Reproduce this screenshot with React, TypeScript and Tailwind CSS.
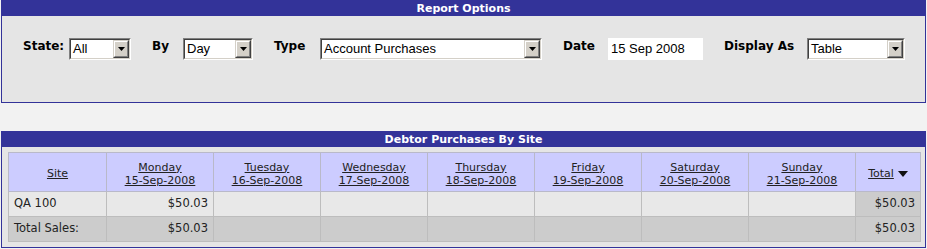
import React from 'react';

const days = [
  { day: 'Monday', date: '15-Sep-2008', value: '$50.03' },
  { day: 'Tuesday', date: '16-Sep-2008', value: '' },
  { day: 'Wednesday', date: '17-Sep-2008', value: '' },
  { day: 'Thursday', date: '18-Sep-2008', value: '' },
  { day: 'Friday', date: '19-Sep-2008', value: '' },
  { day: 'Saturday', date: '20-Sep-2008', value: '' },
  { day: 'Sunday', date: '21-Sep-2008', value: '' },
];

const Arrow: React.FC = () => (
  <svg width="7" height="4" viewBox="0 0 7 4" className="block">
    <path d="M0 0h7L3.5 4z" fill="#000" />
  </svg>
);

// old-school win2k style combo box
const Select: React.FC<{ value: string; width: string }> = ({ value, width }) => (
  <div className={`${width} h-[22px] border border-t-[#808080] border-l-[#808080] border-b-white border-r-white`}>
    <div className="h-full flex border border-t-[#404040] border-l-[#404040] border-b-[#d4d0c8] border-r-[#d4d0c8] bg-white">
      <span className="flex-1 pl-[2px] text-[13px] leading-[18px] text-black font-['Liberation_Sans',Arial,sans-serif] whitespace-nowrap overflow-hidden">
        {value}
      </span>
      <div className="w-[16px] h-full border border-t-[#d4d0c8] border-l-[#d4d0c8] border-b-[#404040] border-r-[#404040]">
        <div className="h-full flex items-center justify-center bg-[#d4d0c8] border border-t-white border-l-white border-b-[#808080] border-r-[#808080]">
          <Arrow />
        </div>
      </div>
    </div>
  </div>
);

const Label: React.FC<{ text: string; width: string }> = ({ text, width }) => (
  <div className={`${width} pt-[1px] text-[12px] leading-[14px] font-bold text-black whitespace-nowrap`}>{text}</div>
);

const PanelHeader: React.FC<{ title: string }> = ({ title }) => (
  <div className="h-[15px] bg-[#333399] text-white text-[11px] leading-[15px] font-bold text-center">{title}</div>
);

const App: React.FC = () => {
  return (
    <div className="w-[927px] h-[249px] bg-[#f2f2f2] font-['DejaVu_Sans',Verdana,sans-serif] overflow-hidden">
      {/* Report options */}
      <div className="ml-[1px] w-[925px] border border-[#333399] bg-[#e5e5e5]">
        <PanelHeader title="Report Options" />
        <div className="h-[86px] pl-[21px] pt-[22px] flex items-start">
          <Label text="State:" width="w-[46px]" />
          <Select value="All" width="w-[62px]" />
          <div className="w-[21px]" />
          <Label text="By" width="w-[31px]" />
          <Select value="Day" width="w-[70px]" />
          <div className="w-[21px]" />
          <Label text="Type" width="w-[46px]" />
          <Select value="Account Purchases" width="w-[222px]" />
          <div className="w-[21px]" />
          <Label text="Date" width="w-[45px]" />
          <div className="w-[95px] h-[22px] bg-white pl-[3px] text-[13px] leading-[22px] text-black font-['Liberation_Sans',Arial,sans-serif]">
            15 Sep 2008
          </div>
          <div className="w-[21px]" />
          <Label text="Display As" width="w-[83px]" />
          <Select value="Table" width="w-[98px]" />
        </div>
      </div>

      {/* Debtor purchases */}
      <div className="mt-[28px] ml-[1px] w-[925px] border border-[#333399] bg-[#e5e5e5]">
        <PanelHeader title="Debtor Purchases By Site" />
        <div className="pl-[6px] pr-[4px] pt-[5px] pb-[5px]">
          <table className="w-[913px] table-fixed border-collapse text-[11px] text-[#222]">
            <colgroup>
              <col className="w-[98px]" />
              {days.map((d) => (
                <col key={d.day} className="w-[107px]" />
              ))}
              <col />
            </colgroup>
            <thead>
              <tr className="h-[39px] bg-[#ccccff]">
                <th className="border border-[#b9b9c9] pt-[3px] font-normal text-center underline leading-[13px]">Site</th>
                {days.map((d) => (
                  <th key={d.day} className="border border-[#b9b9c9] pt-[3px] font-normal text-center underline leading-[13px]">
                    {d.day}
                    <br />
                    {d.date}
                  </th>
                ))}
                <th className="border border-[#b9b9c9] pt-[3px] font-normal leading-[13px]">
                  <span className="inline-flex items-center gap-[4px]">
                    <span className="underline">Total</span>
                    <svg width="10" height="6" viewBox="0 0 10 6">
                      <path d="M0 0h10L5 6z" fill="#111" />
                    </svg>
                  </span>
                </th>
              </tr>
            </thead>
            <tbody>
              <tr className="h-[25px] bg-[#e8e8e8]">
                <td className="border border-[#bdbdbd] px-[5px] text-[11.5px]">QA 100</td>
                {days.map((d) => (
                  <td key={d.day} className="border border-[#bdbdbd] px-[5px] text-right text-[11.5px]">{d.value}</td>
                ))}
                <td className="border border-[#bdbdbd] px-[5px] text-right text-[11.5px] bg-[#cccccc]">$50.03</td>
              </tr>
              <tr className="h-[25px] bg-[#cccccc]">
                <td className="border border-[#bdbdbd] px-[5px] text-[11.5px] whitespace-nowrap">Total Sales:</td>
                {days.map((d) => (
                  <td key={d.day} className="border border-[#bdbdbd] px-[5px] text-right text-[11.5px]">{d.value}</td>
                ))}
                <td className="border border-[#bdbdbd] px-[5px] text-right text-[11.5px]">$50.03</td>
              </tr>
            </tbody>
          </table>
        </div>
      </div>
    </div>
  );
};

export default App;
